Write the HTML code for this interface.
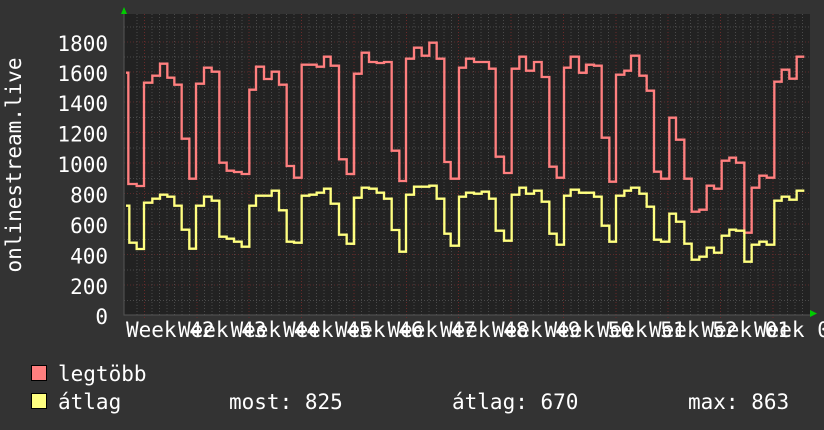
<!DOCTYPE html>
<html><head><meta charset="utf-8"><style>
html,body{margin:0;padding:0;background:#333333;}
svg{display:block;}
text{font-family:"DejaVu Sans Mono","Liberation Mono",monospace;font-size:21px;fill:#ffffff;}
</style></head><body>
<svg width="824" height="430" viewBox="0 0 824 430" xmlns="http://www.w3.org/2000/svg">
<rect x="0" y="0" width="824" height="430" fill="#333333"/>
<rect x="124" y="14" width="686" height="301" fill="#222222"/>
<g stroke="#4a4a4a" stroke-width="1" stroke-dasharray="1,2">
<path d="M124 300.5H810M124 270H810M124 239.5H810M124 209H810M124 178.5H810M124 148H810M124 117.5H810M124 87H810M124 57H810M124 27H810"/>
</g>
<g stroke="#5a2a2a" stroke-width="1" stroke-dasharray="1,2">
<path d="M124 285H810M124 254.5H810M124 224H810M124 193.5H810M124 163H810M124 132.5H810M124 102H810M124 72H810M124 42H810"/>
</g>
<g stroke="#4a4a4a" stroke-width="1" stroke-dasharray="1,2">
<path d="M137 14V315M144.5 14V315M152 14V315M159.5 14V315M167 14V315M174.5 14V315M182 14V315M189.5 14V315M204.5 14V315M212 14V315M219.5 14V315M227 14V315M234.5 14V315M242 14V315M256.5 14V315M264 14V315M271.5 14V315M279 14V315M286.5 14V315M294 14V315M309 14V315M316.5 14V315M324 14V315M331.5 14V315M339 14V315M346.5 14V315M361.5 14V315M369 14V315M376.5 14V315M384 14V315M391.5 14V315M399 14V315M414 14V315M421.5 14V315M429 14V315M436.5 14V315M444 14V315M451.5 14V315M466 14V315M473.5 14V315M481 14V315M488.5 14V315M496 14V315M503.5 14V315M518.5 14V315M526 14V315M533.5 14V315M541 14V315M548.5 14V315M556 14V315M571 14V315M578.5 14V315M586 14V315M593.5 14V315M601 14V315M608.5 14V315M623 14V315M630.5 14V315M638 14V315M645.5 14V315M653 14V315M660.5 14V315M675.5 14V315M683 14V315M690.5 14V315M698 14V315M705.5 14V315M713 14V315M728 14V315M735.5 14V315M743 14V315M750.5 14V315M758 14V315M765.5 14V315M780 14V315M787.5 14V315M795 14V315M802.5 14V315"/>
</g>
<g stroke="#6a2a2a" stroke-width="1" stroke-dasharray="1,2">
<path d="M144.5 14V318M197 14V318M249 14V318M301.5 14V318M354 14V318M406.5 14V318M458.5 14V318M511 14V318M563.5 14V318M616 14V318M668 14V318M720.5 14V318M773 14V318"/>
</g>
<path d="M124 8V315H813" stroke="#555" stroke-width="1" fill="none"/>
<polygon points="121,14 127,14 124,7" fill="#00cc00"/>
<polygon points="810,310 810,317 817,313.5" fill="#00cc00"/>

<g fill="none" stroke-width="7" stroke-linejoin="miter">
<g transform="translate(120,30) scale(0.33333)">
<polyline stroke="#ff7f7f" points="18,128 25,128 25,462 50,462 50,468 72,468 72,158 97,158 97,137 120,137 120,101 142,101 142,143 163,143 163,164 185,164 185,326 208,326 208,446 228,446 228,161 252,161 252,113 275,113 275,125 298,125 298,398 320,398 320,422 342,422 342,426 365,426 365,432 388,432 388,179 408,179 408,110 432,110 432,147 455,147 455,125 477,125 477,164 500,164 500,408 522,408 522,443 545,443 545,104 590,104 590,110 612,110 612,80 632,80 632,107 657,107 657,388 680,388 680,432 702,432 702,131 720,131"/>
<polyline stroke="#ffff80" points="18,527 28,527 28,638 50,638 50,657 72,657 72,518 97,518 97,506 120,506 120,494 142,494 142,500 163,500 163,527 185,527 185,599 208,599 208,656 228,656 228,527 252,527 252,500 275,500 275,512 298,512 298,620 320,620 320,626 342,626 342,635 365,635 365,650 388,650 388,527 408,527 408,497 455,497 455,482 477,482 477,541 500,541 500,635 522,635 522,638 545,638 545,497 568,497 568,494 590,494 590,488 612,488 612,476 632,476 632,521 657,521 657,614 680,614 680,641 702,641 702,503 720,503"/>
</g>
<g transform="translate(350,30) scale(0.33333)">
<polyline stroke="#ff7f7f" points="0,432 12,432 12,131 35,131 35,68 57,68 57,96 80,96 80,99 102,99 102,96 125,96 125,362 148,362 148,453 168,453 168,86 192,86 192,53 215,53 215,77 238,77 238,38 260,38 260,86 283,86 283,396 302,396 302,446 327,446 327,113 348,113 348,86 372,86 372,96 417,96 417,116 437,116 437,380 462,380 462,429 485,429 485,116 508,116 508,80 528,80 528,122 552,122 552,96 575,96 575,141 598,141 598,410 620,410 620,443 642,443 642,113 662,113 662,80 687,80 687,128 710,128 710,104 720,104"/>
<polyline stroke="#ffff80" points="0,641 12,641 12,503 35,503 35,473 57,473 57,476 80,476 80,488 102,488 102,506 125,506 125,600 148,600 148,665 168,665 168,494 192,494 192,470 238,470 238,467 260,467 260,506 283,506 283,611 302,611 302,647 327,647 327,500 348,500 348,488 372,488 372,491 395,491 395,485 417,485 417,506 437,506 437,602 462,602 462,632 485,632 485,494 508,494 508,473 528,473 528,491 552,491 552,482 575,482 575,515 598,515 598,611 620,611 620,644 642,644 642,497 662,497 662,479 687,479 687,488 720,488"/>
</g>
<g transform="translate(580,30) scale(0.33333)">
<polyline stroke="#ff7f7f" points="0,128 18,128 18,104 42,104 42,107 65,107 65,323 88,323 88,455 108,455 108,134 133,134 133,122 153,122 153,77 178,77 178,137 200,137 200,182 222,182 222,425 243,425 243,446 268,446 268,263 288,263 288,329 313,329 313,446 335,446 335,545 358,545 358,539 380,539 380,467 402,467 402,476 425,476 425,392 448,392 448,383 468,383 468,398 493,398 493,608 515,608 515,473 538,473 538,437 560,437 560,443 583,443 583,155 605,155 605,119 628,119 628,146 650,146 650,80 673,80"/>
<polyline stroke="#ffff80" points="0,488 42,488 42,500 65,500 65,587 88,587 88,635 108,635 108,497 133,497 133,482 153,482 153,473 178,473 178,491 200,491 200,530 222,530 222,629 243,629 243,635 268,635 268,551 288,551 288,575 313,575 313,641 335,641 335,689 358,689 358,680 380,680 380,653 402,653 402,668 425,668 425,617 448,617 448,599 468,599 468,602 493,602 493,695 515,695 515,644 538,644 538,635 560,635 560,644 583,644 583,512 605,512 605,500 628,500 628,509 650,509 650,482 673,482"/>
</g>
</g>

<g text-anchor="end">
<text x="108" y="51">1800</text>
<text x="108" y="81">1600</text>
<text x="108" y="111">1400</text>
<text x="108" y="141.5">1200</text>
<text x="108" y="172">1000</text>
<text x="108" y="202.5">800</text>
<text x="108" y="233">600</text>
<text x="108" y="263.5">400</text>
<text x="108" y="294">200</text>
<text x="108" y="324">0</text>
</g>
<text transform="translate(21,165) rotate(-90)" text-anchor="middle">onlinestream.live</text>

<g>
<text x="126" y="337" xml:space="preserve">Week 42</text>
<text x="178" y="337" xml:space="preserve">Week 43</text>
<text x="230.5" y="337" xml:space="preserve">Week 44</text>
<text x="283" y="337" xml:space="preserve">Week 45</text>
<text x="335" y="337" xml:space="preserve">Week 46</text>
<text x="387.5" y="337" xml:space="preserve">Week 47</text>
<text x="440" y="337" xml:space="preserve">Week 48</text>
<text x="492" y="337" xml:space="preserve">Week 49</text>
<text x="544.5" y="337" xml:space="preserve">Week 50</text>
<text x="597" y="337" xml:space="preserve">Week 51</text>
<text x="649" y="337" xml:space="preserve">Week 52</text>
<text x="701.5" y="337" xml:space="preserve">Week 01</text>
<text x="754" y="337" xml:space="preserve">Week 02</text>
</g>

<rect x="31.5" y="365.5" width="15" height="15" fill="#ff7f7f" stroke="#000" stroke-width="1"/>
<rect x="31.5" y="393.5" width="15" height="15" fill="#ffff80" stroke="#000" stroke-width="1"/>
<text x="58" y="381">legtöbb</text>
<text x="58" y="409">átlag</text>
<text x="229" y="409">most: 825</text>
<text x="452" y="409">átlag: 670</text>
<text x="688" y="409">max: 863</text>
</svg>
</body></html>
